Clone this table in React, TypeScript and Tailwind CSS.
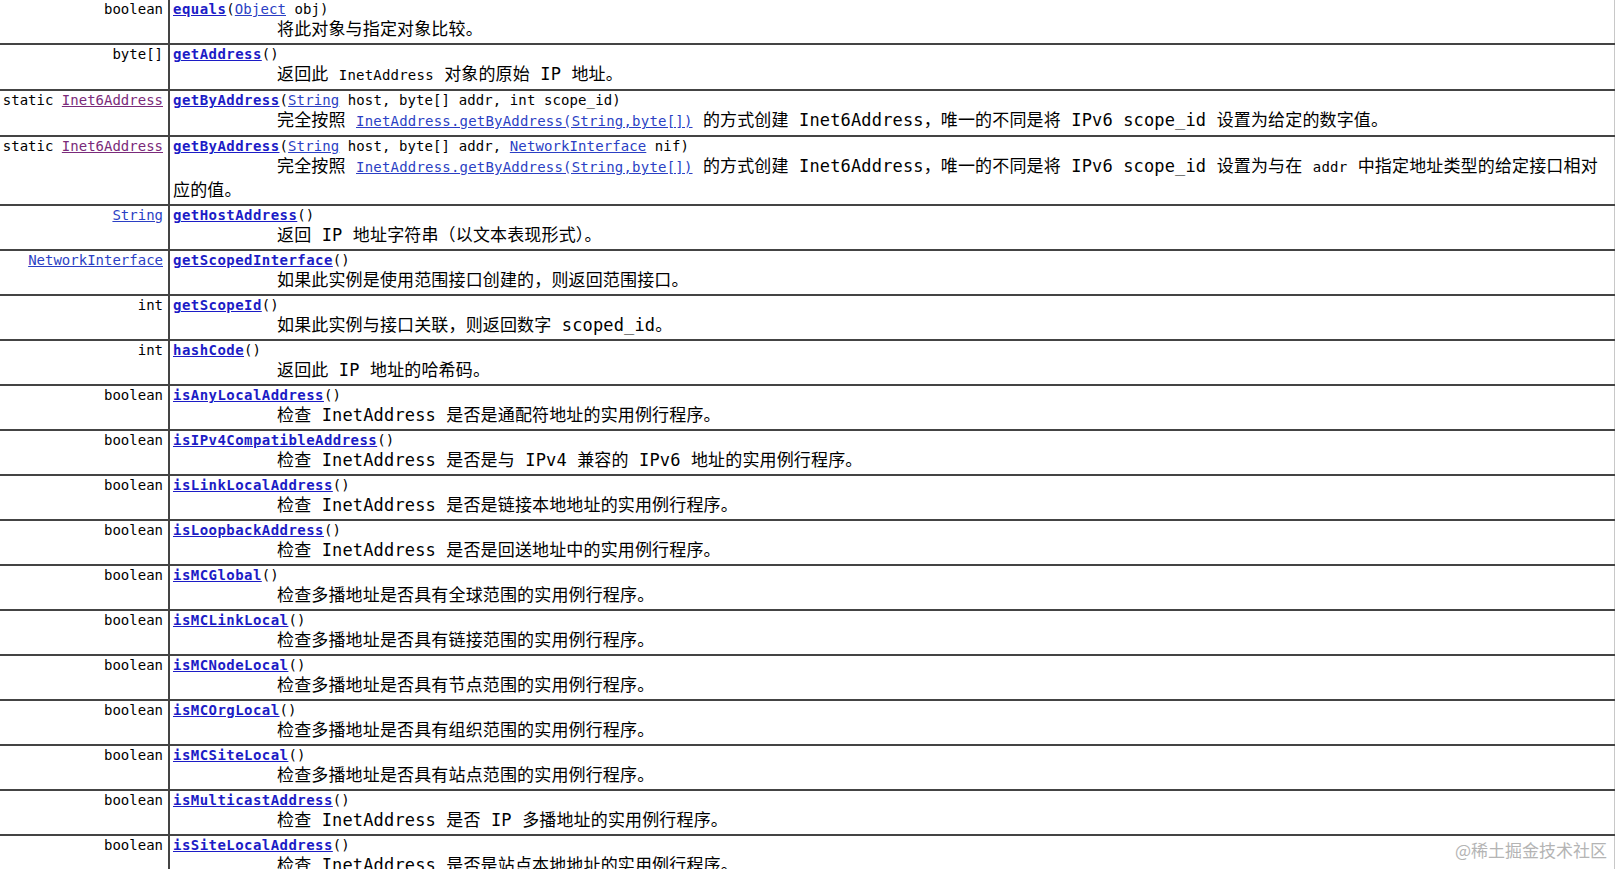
import React from 'react';

type Row = {
  type: React.ReactNode;
  sig: React.ReactNode;
  desc: React.ReactNode;
};

const Method = ({ children }: { children: React.ReactNode }) => (
  <a className="font-bold tracking-[0.45px] text-[#1c1cc6] underline">{children}</a>
);

const TypeLink = ({ children, visited }: { children: React.ReactNode; visited?: boolean }) => (
  <a className={visited ? 'text-[#7a2a7a] underline' : 'text-[#2b3fc4] underline'}>{children}</a>
);

const Code = ({ children }: { children: React.ReactNode }) => (
  <code className="text-[14px] tracking-[0.2px] font-['DejaVu_Sans_Mono',monospace]">{children}</code>
);

const rows: Row[] = [
  {
    type: 'boolean',
    sig: (<><Method>equals</Method>(<TypeLink>Object</TypeLink> obj)</>),
    desc: '将此对象与指定对象比较。',
  },
  {
    type: 'byte[]',
    sig: (<><Method>getAddress</Method>()</>),
    desc: (<>返回此 <Code>InetAddress</Code> 对象的原始 IP 地址。</>),
  },
  {
    type: (<>static <TypeLink visited>Inet6Address</TypeLink></>),
    sig: (<><Method>getByAddress</Method>(<TypeLink>String</TypeLink> host, byte[] addr, int scope_id)</>),
    desc: (
      <>完全按照 <Code><TypeLink>InetAddress.getByAddress(String,byte[])</TypeLink></Code> 的方式创建 Inet6Address，唯一的不同是将 IPv6 scope_id 设置为给定的数字值。</>
    ),
  },
  {
    type: (<>static <TypeLink visited>Inet6Address</TypeLink></>),
    sig: (<><Method>getByAddress</Method>(<TypeLink>String</TypeLink> host, byte[] addr, <TypeLink>NetworkInterface</TypeLink> nif)</>),
    desc: (
      <>完全按照 <Code><TypeLink>InetAddress.getByAddress(String,byte[])</TypeLink></Code> 的方式创建 Inet6Address，唯一的不同是将 IPv6 scope_id 设置为与在 <Code>addr</Code> 中指定地址类型的给定接口相对应的值。</>
    ),
  },
  {
    type: <TypeLink>String</TypeLink>,
    sig: (<><Method>getHostAddress</Method>()</>),
    desc: '返回 IP 地址字符串（以文本表现形式）。',
  },
  {
    type: <TypeLink>NetworkInterface</TypeLink>,
    sig: (<><Method>getScopedInterface</Method>()</>),
    desc: '如果此实例是使用范围接口创建的，则返回范围接口。',
  },
  {
    type: 'int',
    sig: (<><Method>getScopeId</Method>()</>),
    desc: '如果此实例与接口关联，则返回数字 scoped_id。',
  },
  {
    type: 'int',
    sig: (<><Method>hashCode</Method>()</>),
    desc: '返回此 IP 地址的哈希码。',
  },
  {
    type: 'boolean',
    sig: (<><Method>isAnyLocalAddress</Method>()</>),
    desc: '检查 InetAddress 是否是通配符地址的实用例行程序。',
  },
  {
    type: 'boolean',
    sig: (<><Method>isIPv4CompatibleAddress</Method>()</>),
    desc: '检查 InetAddress 是否是与 IPv4 兼容的 IPv6 地址的实用例行程序。',
  },
  {
    type: 'boolean',
    sig: (<><Method>isLinkLocalAddress</Method>()</>),
    desc: '检查 InetAddress 是否是链接本地地址的实用例行程序。',
  },
  {
    type: 'boolean',
    sig: (<><Method>isLoopbackAddress</Method>()</>),
    desc: '检查 InetAddress 是否是回送地址中的实用例行程序。',
  },
  {
    type: 'boolean',
    sig: (<><Method>isMCGlobal</Method>()</>),
    desc: '检查多播地址是否具有全球范围的实用例行程序。',
  },
  {
    type: 'boolean',
    sig: (<><Method>isMCLinkLocal</Method>()</>),
    desc: '检查多播地址是否具有链接范围的实用例行程序。',
  },
  {
    type: 'boolean',
    sig: (<><Method>isMCNodeLocal</Method>()</>),
    desc: '检查多播地址是否具有节点范围的实用例行程序。',
  },
  {
    type: 'boolean',
    sig: (<><Method>isMCOrgLocal</Method>()</>),
    desc: '检查多播地址是否具有组织范围的实用例行程序。',
  },
  {
    type: 'boolean',
    sig: (<><Method>isMCSiteLocal</Method>()</>),
    desc: '检查多播地址是否具有站点范围的实用例行程序。',
  },
  {
    type: 'boolean',
    sig: (<><Method>isMulticastAddress</Method>()</>),
    desc: '检查 InetAddress 是否 IP 多播地址的实用例行程序。',
  },
  {
    type: 'boolean',
    sig: (<><Method>isSiteLocalAddress</Method>()</>),
    desc: '检查 InetAddress 是否是站点本地地址的实用例行程序。',
  },
];

export default function App() {
  return (
    <div className="relative h-[869px] w-[1615px] overflow-hidden bg-white text-black">
      {/* method summary table */}
      <div className="flex flex-col">
        {rows.map((r, i) => (
          <div key={i} className="flex border-b-2 border-[#444]">
            <div className="w-[170px] shrink-0 border-r-2 border-[#444] pr-[5px] text-right text-[14px] leading-[18px] font-['DejaVu_Sans_Mono',monospace] whitespace-nowrap">
              {r.type}
            </div>
            <div className="flex-1 border-r border-[#c8c8c8] pl-[3px] pr-[5px] pb-[2px]">
              <div className="text-[14px] leading-[18px] tracking-[0.1px] font-['DejaVu_Sans_Mono',monospace] whitespace-nowrap">
                {r.sig}
              </div>
              <div className="indent-[104px] text-[17px] leading-[23px] tracking-[0.15px] font-['DejaVu_Sans_Mono','Noto_Sans_CJK_SC',sans-serif]">
                {r.desc}
              </div>
            </div>
          </div>
        ))}
      </div>

      {/* watermark */}
      <div className="absolute bottom-[7px] right-[8px] text-[17px] text-[#b4b4b4] font-['Noto_Sans_CJK_SC',sans-serif]">
        @稀土掘金技术社区
      </div>
    </div>
  );
}
